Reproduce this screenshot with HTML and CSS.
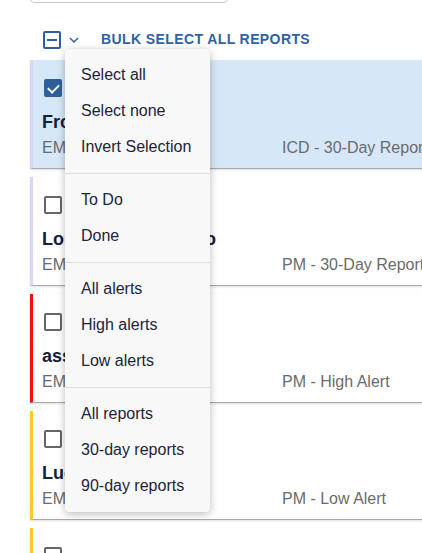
FILE: index.html
```html
<!DOCTYPE html>
<html lang="en">
<head>
<meta charset="UTF-8">
<meta name="viewport" content="width=device-width, initial-scale=1.0">
<title>Reports</title>
<link rel="stylesheet" href="styles.css">
</head>
<body>
<div class="page">
  <div class="search"></div>

  <div class="toolbar">
    <span class="check indeterminate"></span>
    <svg class="chevron" width="10" height="6" viewBox="0 0 10 6"><path d="M1 1l4 4 4-4" fill="none" stroke="#2c63a4" stroke-width="1.5"/></svg>
    <span class="bulk">Bulk select all reports</span>
  </div>

  <div class="menu">
    <div class="group">
      <div class="item">Select all</div>
      <div class="item">Select none</div>
      <div class="item">Invert Selection</div>
    </div>
    <div class="group">
      <div class="item">To Do</div>
      <div class="item">Done</div>
    </div>
    <div class="group">
      <div class="item">All alerts</div>
      <div class="item">High alerts</div>
      <div class="item">Low alerts</div>
    </div>
    <div class="group">
      <div class="item">All reports</div>
      <div class="item">30-day reports</div>
      <div class="item">90-day reports</div>
    </div>
  </div>

  <div class="list">
    <div class="row normal selected">
      <span class="check checked"></span>
      <div class="title">Frona Bell</div>
      <div class="meta"><span class="id">EMR-204417</span><span class="kind">ICD - 30-Day Report</span></div>
    </div>
    <div class="row normal">
      <span class="check"></span>
      <div class="title">Lorraine Santangelo</div>
      <div class="meta"><span class="id">EMR-118302</span><span class="kind">PM - 30-Day Report</span></div>
    </div>
    <div class="row high">
      <span class="check"></span>
      <div class="title">asser Khalil</div>
      <div class="meta"><span class="id">EMR-310958</span><span class="kind">PM - High Alert</span></div>
    </div>
    <div class="row low">
      <span class="check"></span>
      <div class="title">Lucinda Park</div>
      <div class="meta"><span class="id">EMR-227641</span><span class="kind">PM - Low Alert</span></div>
    </div>
    <div class="row low">
      <span class="check"></span>
      <div class="title">Marcus Olsen</div>
      <div class="meta"><span class="id">EMR-402215</span><span class="kind">PM - 90-Day Report</span></div>
    </div>
  </div>
</div>
</body>
</html>
```

FILE: styles.css
```css
body {
  margin:0;
  background:#fff;
  font-family:'Liberation Sans', Arial, sans-serif;
  color:#1c2438;
  overflow:hidden;
}
.page {position:relative; display:flow-root; padding-left:30px; width:560px;}

.search {
  width:196px;
  height:30px;
  margin-top:-29px;
  border:1px solid #c8c8c8;
  border-radius:4px;
}

.toolbar {display:flex; align-items:center; height:18px; margin-top:28px; padding-left:13px;}
.chevron {margin-left:8px;}
.bulk {
  margin-left:22px;
  margin-top:-2px;
  font-size:14px;
  font-weight:bold;
  letter-spacing:0.4px;
  text-transform:uppercase;
  color:#2c63a4;
}

/* checkboxes */
.check {
  position:relative;
  display:block;
  box-sizing:border-box;
  width:18px;
  height:18px;
  border:2px solid #666;
  border-radius:2px;
}
.check.indeterminate {border-color:#2c5f9c;}
.check.indeterminate::after {
  content:'';
  position:absolute;
  left:2px; right:2px; top:6px;
  height:2px;
  background:#2c5f9c;
}
.check.checked {background:#2c5f9c; border-color:#2c5f9c;}
.check.checked::after {
  content:'';
  position:absolute;
  left:4px; top:1px;
  width:5px; height:9px;
  border:solid #fff;
  border-width:0 2px 2px 0;
  transform:rotate(45deg);
}

/* report rows */
.list {display:flex; flex-direction:column; gap:8px; margin-top:11px;}
.row {
  height:109px;
  box-sizing:border-box;
  padding:19px 0 0 9px;
  border-left:3px solid #d6d6f7;
  border-bottom:1px solid #a9a9a9;
  box-shadow:0 1px 2px rgba(0,0,0,0.12);
  background:#fff;
}
.row.selected {background:#d6e8f8;}
.row.high {border-left-color:#f51010;}
.row.low {border-left-color:#f9ca2a;}
.row .check {margin-left:2px;}
.title {margin-top:14px; font-size:18px; font-weight:bold; line-height:22px; color:#16203a; white-space:nowrap;}
.meta {display:flex; margin-top:5px; font-size:16px; line-height:20px; color:#6b6b6b; white-space:nowrap;}
.meta .id {width:240px;}

/* bulk select dropdown */
.menu {
  position:absolute;
  left:65px;
  top:49px;
  z-index:2;
  width:145px;
  background:#f8f8f8;
  border-radius:4px;
  box-shadow:0 2px 8px rgba(0,0,0,0.28);
}
.group {padding:8px 0;}
.group + .group {border-top:1px solid #dcdcdc;}
.item {height:36px; line-height:36px; padding-left:16px; font-size:16px; color:#1c2438; white-space:nowrap;}
```
